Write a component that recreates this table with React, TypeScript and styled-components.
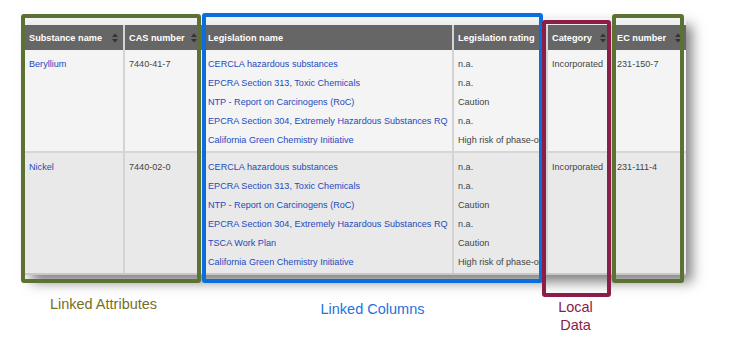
import styled, { createGlobalStyle } from "styled-components";

const GlobalStyle = createGlobalStyle`
  html, body {
    margin: 0;
    padding: 0;
    background: #fff;
    font-family: "Liberation Sans", Arial, sans-serif;
  }
`;

type Column = { label: string; width: number; sortable: boolean };

const columns: Column[] = [
  { label: "Substance name", width: 99, sortable: true },
  { label: "CAS number", width: 79, sortable: true },
  { label: "Legislation name", width: 250, sortable: false },
  { label: "Legislation rating", width: 94, sortable: false },
  { label: "Category", width: 65, sortable: true },
  { label: "EC number", width: 74, sortable: true },
];

type Substance = {
  name: string;
  cas: string;
  legislation: [string, string][];
  category: string;
  ec: string;
};

const substances: Substance[] = [
  {
    name: "Beryllium",
    cas: "7440-41-7",
    legislation: [
      ["CERCLA hazardous substances", "n.a."],
      ["EPCRA Section 313, Toxic Chemicals", "n.a."],
      ["NTP - Report on Carcinogens (RoC)", "Caution"],
      ["EPCRA Section 304, Extremely Hazardous Substances RQ", "n.a."],
      ["California Green Chemistry Initiative", "High risk of phase-out"],
    ],
    category: "Incorporated",
    ec: "231-150-7",
  },
  {
    name: "Nickel",
    cas: "7440-02-0",
    legislation: [
      ["CERCLA hazardous substances", "n.a."],
      ["EPCRA Section 313, Toxic Chemicals", "n.a."],
      ["NTP - Report on Carcinogens (RoC)", "Caution"],
      ["EPCRA Section 304, Extremely Hazardous Substances RQ", "n.a."],
      ["TSCA Work Plan", "Caution"],
      ["California Green Chemistry Initiative", "High risk of phase-out"],
    ],
    category: "Incorporated",
    ec: "231-111-4",
  },
];

// annotation frames drawn over the table
const callouts = [
  { color: "#5b7233", left: 21, top: 14, width: 180, height: 269 },
  { color: "#0a6fdc", left: 202, top: 13, width: 341, height: 270 },
  { color: "#8c1c48", left: 542, top: 20, width: 69, height: 277 },
  { color: "#5b7233", left: 612, top: 14, width: 72, height: 269 },
];

const SortIcon = () => (
  <svg width="6" height="10" viewBox="0 0 6 10">
    <polygon points="0,4 3,0.5 6,4" fill="#333" />
    <polygon points="0,6 3,9.5 6,6" fill="#333" />
  </svg>
);

const App = () => {
  return (
    <Page>
      <GlobalStyle />
      <Figure>
        <TableFrame>
          <Grid>
            <colgroup>
              {columns.map((c) => (
                <col key={c.label} style={{ width: c.width }} />
              ))}
            </colgroup>
            <thead>
              <tr>
                {columns.map((c) => (
                  <HeadCell key={c.label}>
                    <HeadInner>
                      <span>{c.label}</span>
                      {c.sortable && <SortIcon />}
                    </HeadInner>
                  </HeadCell>
                ))}
              </tr>
            </thead>
            <tbody>
              {substances.map((s, i) => (
                <BodyRow key={s.name} $shade={i % 2 === 1}>
                  <Cell>
                    <Lines>
                      <Link>{s.name}</Link>
                    </Lines>
                  </Cell>
                  <Cell>
                    <Lines>{s.cas}</Lines>
                  </Cell>
                  <Cell>
                    {s.legislation.map(([name]) => (
                      <Lines key={name}>
                        <Link>{name}</Link>
                      </Lines>
                    ))}
                  </Cell>
                  <Cell>
                    {s.legislation.map(([name, rating]) => (
                      <Lines key={name}>{rating}</Lines>
                    ))}
                  </Cell>
                  <Cell>
                    <Lines>{s.category}</Lines>
                  </Cell>
                  <Cell>
                    <Lines>{s.ec}</Lines>
                  </Cell>
                </BodyRow>
              ))}
            </tbody>
          </Grid>
        </TableFrame>

        {callouts.map((c, i) => (
          <Callout
            key={i}
            $color={c.color}
            style={{ left: c.left, top: c.top, width: c.width, height: c.height }}
          />
        ))}

        <Captions>
          <Caption $color="#74701f" $offset={0} $width={180} $nudge={15}>
            Linked Attributes
          </Caption>
          <Caption $color="#1f72dc" $offset={5} $width={341} $nudge={0}>
            Linked Columns
          </Caption>
          <Caption $color="#8c1c48" $offset={3} $width={69} $nudge={6}>
            Local
            <br />
            Data
          </Caption>
        </Captions>
      </Figure>
    </Page>
  );
};

export default App;

const Page = styled.div`
  width: 733px;
  height: 342px;
  overflow: hidden;
  background: #fff;
`;

const Figure = styled.div`
  position: relative;
  padding-top: 18px;
`;

const TableFrame = styled.div`
  width: 661px;
  margin-left: 25px;
  padding-top: 7px;
  padding-bottom: 2px;
  background: linear-gradient(#f4f4f4, #ececec 7px, #c8c8c8 7px);
  box-shadow: 6px 7px 12px rgba(0, 0, 0, 0.5);
`;

const Grid = styled.table`
  width: 661px;
  table-layout: fixed;
  border-collapse: collapse;
`;

const HeadCell = styled.th`
  height: 25px;
  padding: 0 5px 0 4px;
  background: #666;
  color: #fff;
  font-size: 9.2px;
  font-weight: bold;
  text-align: left;
  border-right: 2px solid #d4d4d4;
  white-space: nowrap;
  overflow: hidden;

  &:last-child {
    border-right: none;
  }
`;

const HeadInner = styled.div`
  display: flex;
  align-items: center;
  justify-content: space-between;
`;

const BodyRow = styled.tr<{ $shade: boolean }>`
  background: ${(p) => (p.$shade ? "#e9e9e9" : "#f4f4f4")};
  border-bottom: 2px solid #d6d6d6;

  &:last-child {
    border-bottom: none;
  }
`;

const Cell = styled.td`
  vertical-align: top;
  padding: 5px 4px 1px 4px;
  border-right: 2px solid #d4d4d4;
  font-size: 9.1px;
  color: #444;
  overflow: hidden;

  &:last-child {
    border-right: none;
  }
`;

const Lines = styled.div`
  line-height: 19px;
  white-space: nowrap;
  overflow: hidden;
`;

const Link = styled.span`
  color: #2449bd;
`;

const Callout = styled.div<{ $color: string }>`
  position: absolute;
  box-sizing: border-box;
  border: 4px solid ${(p) => p.$color};
  border-radius: 3px;
  pointer-events: none;
`;

const Captions = styled.div`
  display: flex;
  padding-left: 21px;
  margin-top: 20px;
  gap: 1px;
`;

const Caption = styled.div<{
  $color: string;
  $offset: number;
  $width: number;
  $nudge: number;
}>`
  box-sizing: border-box;
  width: ${(p) => p.$width}px;
  margin-top: ${(p) => p.$offset}px;
  padding-right: ${(p) => p.$nudge}px;
  color: ${(p) => p.$color};
  font-size: 14.5px;
  line-height: 18px;
  text-align: center;
`;
